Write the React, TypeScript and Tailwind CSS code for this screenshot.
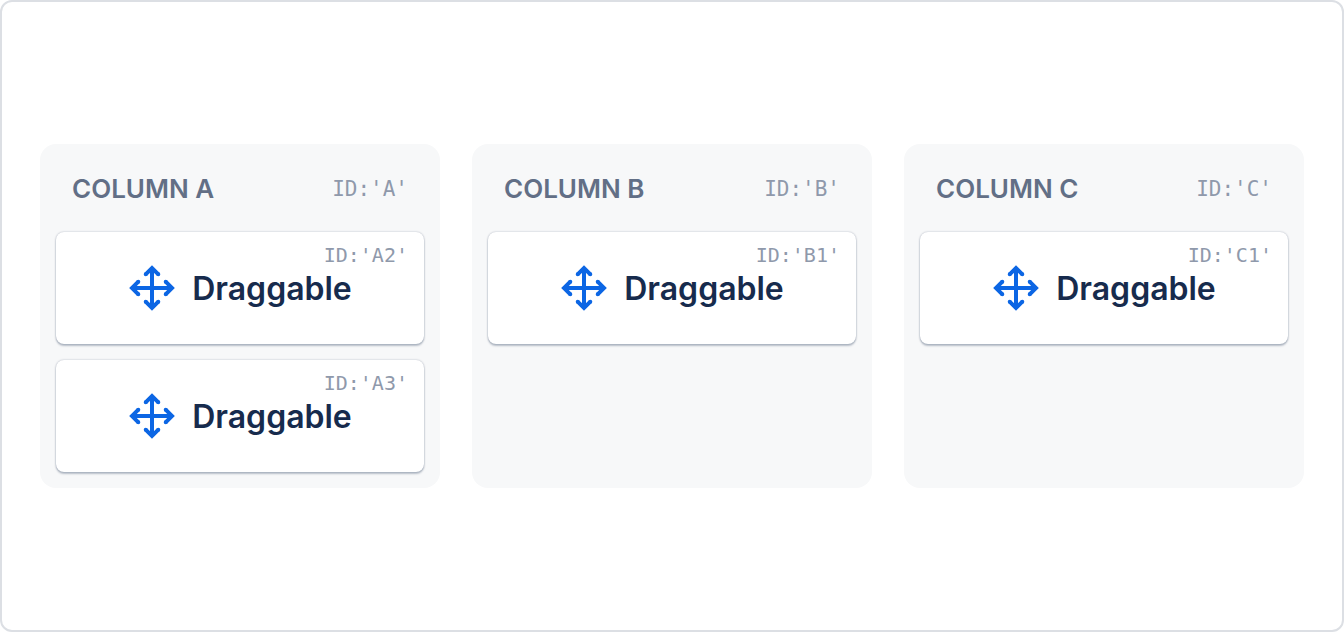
type CardData = { id: string };
type ColumnData = { id: string; cards: CardData[] };

const columns: ColumnData[] = [
  { id: 'A', cards: [{ id: 'A2' }, { id: 'A3' }] },
  { id: 'B', cards: [{ id: 'B1' }] },
  { id: 'C', cards: [{ id: 'C1' }] },
];

function MoveIcon() {
  return (
    <svg
      className="size-12 shrink-0 text-[#0c66e4]"
      viewBox="0 0 48 48"
      fill="none"
      stroke="currentColor"
      strokeWidth="4"
      aria-hidden="true"
    >
      <path d="M24 4V44M4 24H44" />
      <path d="M17.4 10.6L24 4L30.6 10.6M37.4 17.4L44 24L37.4 30.6M30.6 37.4L24 44L17.4 37.4M10.6 30.6L4 24L10.6 17.4" />
      <path
        d="M17.7 10.3h.01M30.3 10.3h.01M37.7 17.7h.01M37.7 30.3h.01M30.3 37.7h.01M17.7 37.7h.01M10.3 30.3h.01M10.3 17.7h.01"
        strokeLinecap="round"
      />
    </svg>
  );
}

function Card({ id }: CardData) {
  return (
    <li
      draggable
      className="relative flex h-28 cursor-grab items-center justify-center gap-4 rounded-lg bg-white shadow-[0_2px_2px_#091e4240,0_0_2px_#091e424f]"
    >
      <MoveIcon />
      <span className="pt-0.5 text-[32px] leading-10 font-semibold text-[#172b4d]">Draggable</span>
      <span className="absolute top-3 right-4 font-['DejaVu_Sans_Mono',monospace] text-[20px] leading-[22px] text-[#8f99ab]">
        {`ID:'${id}'`}
      </span>
    </li>
  );
}

function Column({ id, cards }: ColumnData) {
  return (
    <section className="rounded-2xl bg-[#f7f8f9] px-4 pb-4">
      <header className="flex h-22 items-center justify-between px-4 pt-0.5">
        <h2 className="text-[26px] leading-8 font-semibold text-[#626f86]">COLUMN {id}</h2>
        <span className="font-['DejaVu_Sans_Mono',monospace] text-[21px] leading-[22px] text-[#8f99ab]">
          {`ID:'${id}'`}
        </span>
      </header>
      <ul className="flex flex-col gap-4">
        {cards.map((card) => (
          <Card key={card.id} id={card.id} />
        ))}
      </ul>
    </section>
  );
}

export default function App() {
  return (
    <main className="flex min-h-screen items-center rounded-xl border-2 border-[#dcdfe4] bg-white px-[38px] font-['Inter',sans-serif]">
      <div className="grid w-full grid-cols-3 gap-8">
        {columns.map((column) => (
          <Column key={column.id} id={column.id} cards={column.cards} />
        ))}
      </div>
    </main>
  );
}
